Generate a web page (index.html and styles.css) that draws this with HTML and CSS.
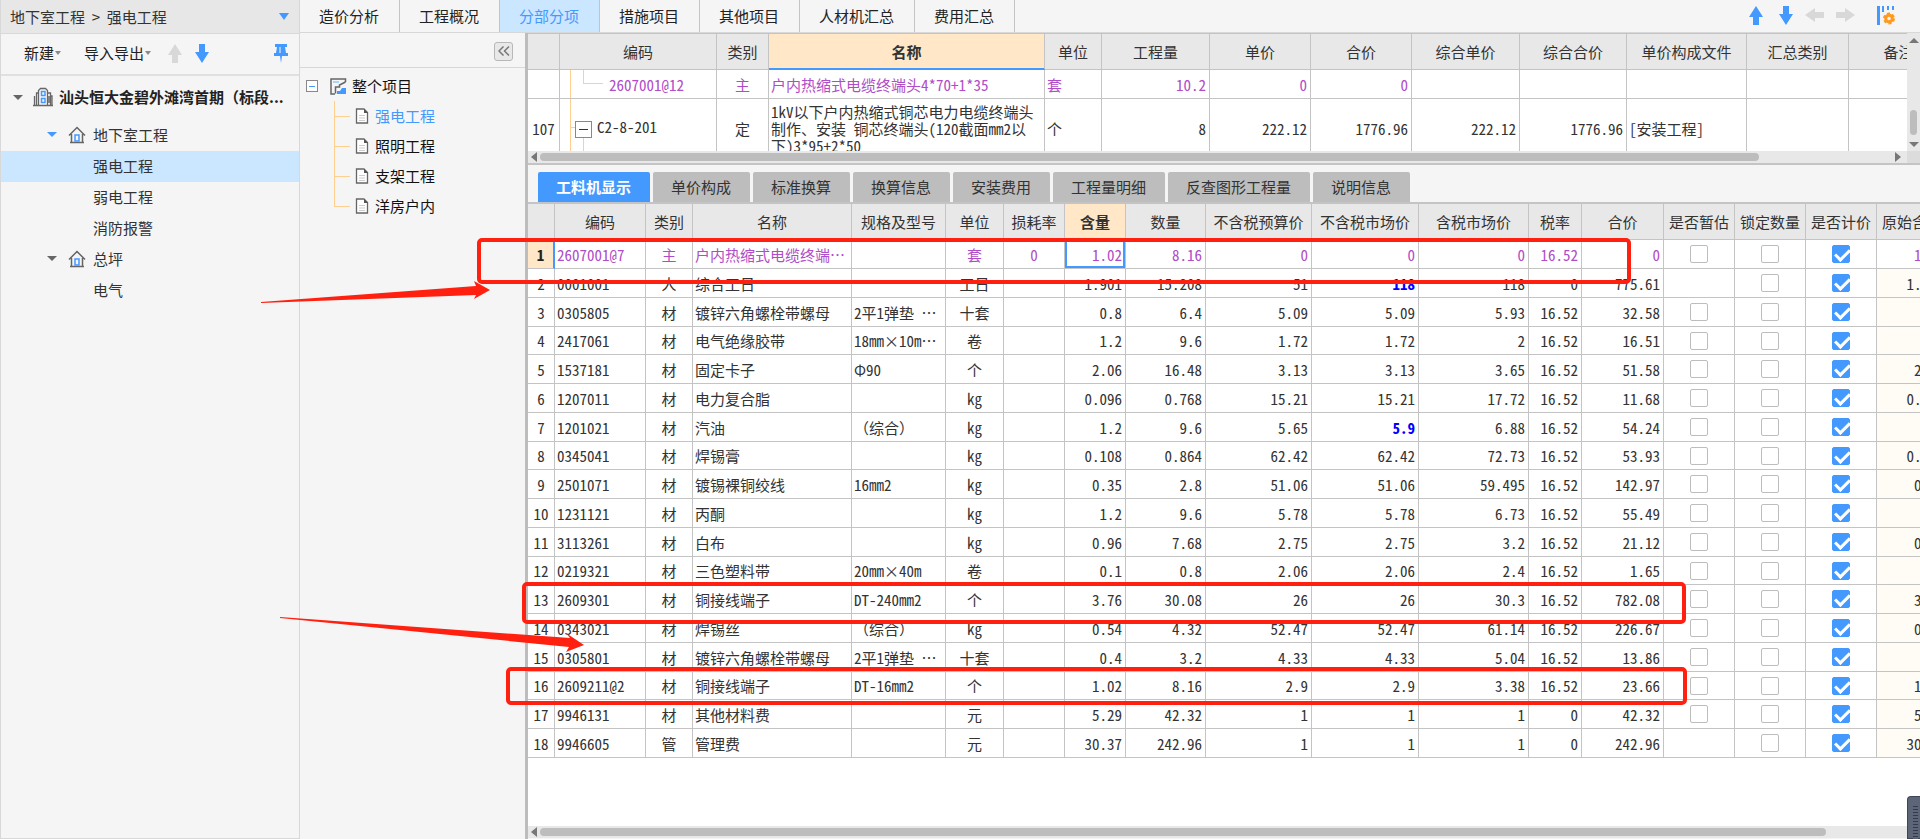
FILE: index.html
```html
<!DOCTYPE html>
<html lang="zh-CN">
<head>
<meta charset="utf-8">
<title>强电工程 - 分部分项</title>
<link rel="stylesheet" href="styles.css">
</head>
<body>
<svg class="defs" aria-hidden="true">
  <symbol id="arrow" viewBox="0 0 14 19"><path d="M7 0 14 11H10V19H4V11H0Z"/></symbol>
  <symbol id="house" viewBox="0 0 18 18"><path d="M1 9.500 9 1.500l8 8M3.500 8v8.500M14.500 8v8.500M2 16.500h14" fill="none" stroke="#666" stroke-width="1.500"/><rect x="7" y="9" width="4" height="6" fill="none" stroke="#49f" stroke-width="1.500"/></symbol>
  <symbol id="page" viewBox="0 0 14 16"><path d="M1.500 1H9l3.500 3.500V15h-11Z" fill="#fff" stroke="#666" stroke-width="1.300"/><path d="M9 1v4h4Z" fill="#555"/><path d="M4 7.500h6M4 10h6M4 12.500h6" stroke="#ccc"/></symbol>
</svg>
<div class="app">
  <aside class="sidebar">
    <div class="crumb"><span>地下室工程&nbsp; &gt;&nbsp; 强电工程</span><i class="tri blue wide"></i></div>
    <div class="side-tools">
      <button class="menu">新建<i class="tri small"></i></button>
      <button class="menu">导入导出<i class="tri small"></i></button>
      <button class="ico off" aria-label="上移"><svg width="14" height="19"><use href="#arrow"/></svg></button>
      <button class="ico down" aria-label="下移"><svg width="14" height="19"><use href="#arrow"/></svg></button>
      <button class="ico pin" aria-label="固定"><svg width="14" height="19" viewBox="0 0 14 19"><path d="M1 0h12v3h-2l1 6h2v3H8l-1 7-1-7H0V9h2l1-6H1Z"/><path d="M6 3v6" stroke="#fff"/></svg></button>
    </div>
    <ul class="tree">
      <li class="root"><i class="tri"></i><svg width="20" height="20" viewBox="0 0 20 20" fill="none" stroke="#666" stroke-width="1.300"><path d="M5.500 18.500V3.500l2-2h5l2 2v15M5.500 6h-2v12M14.500 6h3v12M0 18.500h20M1.500 9v9M17.500 9h1.500v9M16 9v7"/><path d="M8.500 4.500h3.500v4H8.500zM8.500 11.500h3.500v4H8.500z" stroke="#49f" stroke-width="1.500"/></svg><b>汕头恒大金碧外滩湾首期（标段...</b></li>
      <li class="l1"><i class="tri blue"></i><svg width="18" height="18"><use href="#house"/></svg><span>地下室工程</span></li>
      <li class="l2 on">强电工程</li>
      <li class="l2">弱电工程</li>
      <li class="l2">消防报警</li>
      <li class="l1"><i class="tri"></i><svg width="18" height="18"><use href="#house"/></svg><span>总坪</span></li>
      <li class="l2">电气</li>
    </ul>
  </aside>
  <div class="work">
    <nav class="topbar">
      <button>造价分析</button><button>工程概况</button><button class="on">分部分项</button><button>措施项目</button><button>其他项目</button><button>人材机汇总</button><button>费用汇总</button>
      <div class="top-tools">
        <svg width="14" height="19"><use href="#arrow"/></svg>
        <svg class="flip" width="14" height="19"><use href="#arrow"/></svg>
        <svg class="off" width="19" height="14" viewBox="0 0 19 14"><path d="M0 7 10 0v4h9v6h-9v4Z"/></svg>
        <svg class="off" width="19" height="14" viewBox="0 0 19 14"><path d="M19 7 9 0v4H0v6h9v4Z"/></svg>
        <svg class="cfg" width="18" height="19" viewBox="0 0 18 19"><path d="M0 0h3v19H0zM5 0h2v6H5zM10 0h2v4h-2zM15 0h2v4h-2z"/><circle cx="12" cy="12.500" r="3.300" fill="none" stroke="#ff9a1f" stroke-width="3"/><circle cx="12" cy="12.500" r="5" fill="none" stroke="#ff9a1f" stroke-width="2" stroke-dasharray="3 2.240"/></svg>
      </div>
    </nav>
    <div class="panes">
      <section class="project">
        <div class="project-head"><button class="fold" aria-label="收起"><svg width="12" height="10" viewBox="0 0 12 10" fill="none" stroke="#777" stroke-width="1.500"><path d="M5.500 0.500 1 5l4.500 4.500M11 0.500 6.500 5 11 9.500"/></svg></button></div>
        <div class="whole"><i class="minus"></i><svg width="17" height="17" viewBox="0 0 17 17"><path d="M15.500 4V1H1v15h4" fill="none" stroke="#666" stroke-width="1.500"/><path d="M3 4h6" stroke="#8cf" stroke-width="1.500"/><path d="M5.500 15.500V9h4V7l6-3" fill="none" stroke="#666" stroke-width="1.500"/><path d="M7 16v-3h3l2-3h4v6Z" fill="#49f"/></svg><span>整个项目</span></div>
        <ul class="branch">
          <li class="on"><svg width="14" height="16"><use href="#page"/></svg>强电工程</li>
          <li><svg width="14" height="16"><use href="#page"/></svg>照明工程</li>
          <li><svg width="14" height="16"><use href="#page"/></svg>支架工程</li>
          <li><svg width="14" height="16"><use href="#page"/></svg>洋房户内</li>
        </ul>
      </section>
      <main class="main">
        <div class="upper">
          <div class="upper-view">
            <table class="grid items">
              <colgroup><col class="w32"><col class="w157"><col class="w52"><col class="w276"><col class="w57"><col class="w108"><col class="w101"><col class="w101"><col class="w108"><col class="w107"><col class="w120"><col class="w102"><col class="w100"></colgroup>
              <thead><tr><th></th><th>编码</th><th>类别</th><th class="sel">名称</th><th>单位</th><th>工程量</th><th>单价</th><th>合价</th><th>综合单价</th><th>综合合价</th><th>单价构成文件</th><th>汇总类别</th><th>备注</th></tr></thead>
              <tbody>
                <tr class="main-mat"><td></td><td class="code leaf">2607001@12</td><td class="c">主</td><td>户内热缩式电缆终端头4*70+1*35</td><td>套</td><td class="r">10.2</td><td class="r">0</td><td class="r">0</td><td></td><td></td><td></td><td></td><td></td></tr>
                <tr class="tall"><td class="c">107</td><td class="code node"><i class="minus dark"></i>C2-8-201</td><td class="c">定</td><td>1kV以下户内热缩式铜芯电力电缆终端头<br>制作、安装 铜芯终端头(120截面mm2以<br>下)3*95+2*50</td><td>个</td><td class="r">8</td><td class="r">222.12</td><td class="r">1776.96</td><td class="r">222.12</td><td class="r">1776.96</td><td>[安装工程]</td><td></td><td></td></tr>
              </tbody>
            </table>
          </div>
          <div class="vbar"><i class="up"></i><i class="vthumb"></i><i class="dn"></i></div>
          <div class="hbar"><i class="lt"></i><i class="thumb upper-thumb"></i><i class="rt"></i></div>
          <div class="corner"></div>
        </div>
        <nav class="subtabs">
          <button class="on">工料机显示</button><button>单价构成</button><button>标准换算</button><button>换算信息</button><button>安装费用</button><button>工程量明细</button><button>反查图形工程量</button><button>说明信息</button>
        </nav>
        <div class="lower">
          <table class="grid parts">
            <colgroup><col class="w27"><col class="w91"><col class="w47"><col class="w159"><col class="w94"><col class="w58"><col class="w61"><col class="w61"><col class="w80"><col class="w106"><col class="w107"><col class="w110"><col class="w53"><col class="w82"><col class="w71"><col class="w71"><col class="w71"><col class="w71"></colgroup>
            <thead><tr><th></th><th>编码</th><th>类别</th><th>名称</th><th>规格及型号</th><th>单位</th><th>损耗率</th><th class="sel">含量</th><th>数量</th><th>不含税预算价</th><th>不含税市场价</th><th>含税市场价</th><th>税率</th><th>合价</th><th>是否暂估</th><th>锁定数量</th><th>是否计价</th><th>原始含量</th></tr></thead>
            <tbody id="parts"></tbody>
          </table>
        </div>
        <div class="hbar last"><i class="lt"></i><i class="thumb lower-thumb"></i></div>
      </main>
    </div>
  </div>
</div>
<div class="mark mark-a"></div>
<div class="mark mark-b"></div>
<div class="mark mark-c"></div>
<svg class="pointers" width="600" height="700" aria-hidden="true"><path d="M261 302 476 286l-2-5 16 9-16 9 2-4L261 303ZM280 617l290 21-4-5 18 12-18 7 3-5L280 618Z"/></svg>
<div class="dock"><i></i></div>
<script src="parts.js"></script>
</body>
</html>
```
FILE: styles.css
```css
* { box-sizing: border-box; }
body {
  margin: 0;
  font: 15px/20px "Noto Sans CJK SC", sans-serif;
  color: #333;
  background: #f5f5f5;
  overflow: hidden;
}
button {
  font: inherit;
  color: inherit;
  border: 0;
  padding: 0;
  background: none;
  white-space: nowrap;
}
ul { list-style: none; margin: 0; padding: 0; }
svg { flex: none; display: block; }
.defs { position: absolute; width: 0; height: 0; }
.app { display: flex; height: 100vh; }

.tri {
  flex: none;
  width: 0;
  border: 5px solid transparent;
  border-top-color: #666;
  border-bottom: 0;
}
.tri.blue { border-top-color: #4499ff; }
.tri.wide { border-top-width: 7px; }
.tri.small { border-width: 4px 3px 0; border-top-color: #888; }

/* Left navigation */
.sidebar {
  flex: none;
  width: 300px;
  border: 1px solid #d8d8d8;
  border-top: 0;
  display: flex;
  flex-direction: column;
}
.crumb {
  display: flex;
  align-items: center;
  justify-content: space-between;
  height: 34px;
  padding: 0 10px 0 9px;
  background: #e7e7e7;
  border-bottom: 1px solid #d8d8d8;
}
.side-tools {
  display: flex;
  align-items: center;
  height: 42px;
  padding: 0 11px 2px 23px;
  border-bottom: 2px solid #e0e0e0;
  color: #222;
}
.menu { display: flex; align-items: center; gap: 1px; margin-right: 23px; }
.menu + .menu { margin-right: 17px; }
.ico { fill: #4499ff; margin-right: 13px; }
.ico.off, .off { fill: #d8d8d8; }
.down svg, .flip { transform: rotate(180deg); }
.ico.pin { margin: 0 0 0 auto; }
.tree li { display: flex; align-items: center; height: 31px; padding-bottom: 2px; }
.tree .root { height: 44px; padding-left: 12px; color: #222; }
.root svg { margin: 0 6px 0 10px; }
.root b { white-space: nowrap; }
.tree .l1 { padding-left: 46px; }
.l1 svg { margin: 0 7px 0 11px; }
.tree .l2 { padding-left: 92px; }
.tree .on { background: #cbe6ff; }

/* Module tabs */
.work { flex: 1; min-width: 0; display: flex; flex-direction: column; }
.topbar {
  display: flex;
  flex: none;
  height: 33px;
  border-bottom: 1px solid #d8d8d8;
}
.topbar button {
  padding: 0 20px 0 19px;
  border-right: 1px solid #c4c4c4;
  color: #222;
}
.topbar .on { background: #cbe6ff; color: #4499ff; }
.top-tools {
  display: flex;
  align-items: center;
  gap: 12px;
  margin-left: auto;
  padding: 0 25px 2px 0;
  fill: #4499ff;
}
.top-tools .flip { margin-left: 4px; }
.top-tools .cfg { margin-left: 10px; }
.panes { flex: 1; min-height: 0; display: flex; }

/* Project outline */
.project { flex: none; width: 225px; color: #111; }
.project-head {
  display: flex;
  align-items: center;
  justify-content: flex-end;
  height: 35px;
  padding: 2px 12px 0 0;
  border-bottom: 1px solid #d8d8d8;
}
.fold {
  width: 19px;
  height: 19px;
  display: grid;
  place-items: center;
  border: 1px solid #b8b8b8;
  border-radius: 3px;
  background: #e8e8e8;
}
.whole { display: flex; align-items: center; height: 33px; padding: 3px 0 0 6px; }
.whole svg { margin: 0 5px 0 12px; }
.minus {
  flex: none;
  width: 12px;
  height: 12px;
  border: 1px solid #888;
  background: linear-gradient(#4499ff, #4499ff) center / 6px 1px no-repeat #fff;
}
.branch li { display: flex; align-items: center; height: 30px; padding-left: 34px; }
.branch li::before {
  content: "";
  width: 16px;
  height: 30px;
  margin-right: 5px;
  background:
    linear-gradient(#ffcf8f, #ffcf8f) 0 0 / 1px 100% no-repeat,
    linear-gradient(#ffcf8f, #ffcf8f) 0 15px / 100% 1px no-repeat;
}
.branch li:last-child::before { background-size: 1px 15px, 100% 1px; }
.branch svg { margin-right: 6px; }
.branch .on { color: #4499ff; }

/* Data grids */
.main {
  flex: 1;
  min-width: 0;
  display: flex;
  flex-direction: column;
  border-left: 3px solid #bdbdbd;
}
.upper {
  flex: none;
  display: grid;
  grid-template: 118px 12px / 1fr 13px;
  border-bottom: 2px solid #c4c4c4;
}
.upper-view { overflow: hidden; background: #fff; }
.grid {
  table-layout: fixed;
  border-collapse: separate;
  border-spacing: 0;
  font: 15px/17px "Noto Sans Mono CJK SC", "Noto Sans CJK SC", monospace;
  background: #fff;
  color: #333;
}
.items { width: 1421px; border-top: 1px solid #c4c4c4; }
.parts { width: 1420px; }
.grid th, .grid td {
  border: solid #c4c4c4;
  border-width: 0 1px 1px 0;
  padding: 0 3px 0 2px;
  white-space: nowrap;
  overflow: hidden;
}
.grid th { height: 36px; background: #e8e8e8; font-weight: 400; padding: 0; }
.grid th.sel { background: #ffe7c8; font-weight: 700; }
.items th.sel { border-bottom: 2px solid #4499ff; }
.grid td { height: 29px; text-align: left; }
.grid .c { text-align: center; padding: 0; }
.grid .r { text-align: right; }
.grid .main-mat { color: #b04cc8; }
.grid .tall td { height: 59px; }
.grid .code { padding-left: 49px; }
.grid .leaf {
  background:
    linear-gradient(#ffcf8f, #ffcf8f) 10px 0 / 1px 100% no-repeat,
    linear-gradient(#ffcf8f, #ffcf8f) 23px 0 / 1px 14px no-repeat,
    linear-gradient(#ffcf8f, #ffcf8f) 23px 13px / 20px 1px no-repeat;
}
.grid .node {
  padding-left: 15px;
  background:
    linear-gradient(#ffcf8f, #ffcf8f) 10px 0 / 1px 100% no-repeat,
    linear-gradient(#ffcf8f, #ffcf8f) 10px 28px / 6px 1px no-repeat,
    linear-gradient(#ffcf8f, #ffcf8f) 23px 36px / 1px 24px no-repeat;
}
.minus.dark {
  display: inline-block;
  vertical-align: middle;
  width: 17px;
  height: 17px;
  margin-right: 5px;
  background: linear-gradient(#333, #333) center / 9px 1px no-repeat #fff;
}
.w27 { width: 27px; } .w32 { width: 32px; } .w47 { width: 47px; }
.w52 { width: 52px; } .w53 { width: 53px; } .w57 { width: 57px; }
.w58 { width: 58px; } .w61 { width: 61px; } .w71 { width: 71px; }
.w80 { width: 80px; } .w82 { width: 82px; } .w91 { width: 91px; }
.w94 { width: 94px; } .w100 { width: 100px; } .w101 { width: 101px; }
.w102 { width: 102px; } .w106 { width: 106px; } .w107 { width: 107px; }
.w108 { width: 108px; } .w110 { width: 110px; } .w120 { width: 120px; }
.w157 { width: 157px; } .w159 { width: 159px; } .w276 { width: 276px; }

.parts tr:nth-child(4n) td { height: 28px; }
.parts .orig { background: #fffbf5; }
.parts .main-mat .orig { background: #fff; }
.parts .main-mat .num {
  background: #ffe7c8;
  color: #222;
  font-weight: 700;
  border-right: 2px solid #4499ff;
}
.parts .focus { box-shadow: inset 0 0 0 2px #4499ff; }
.parts .changed { color: #00f; font-weight: 700; }
.parts input {
  appearance: none;
  display: block;
  width: 18px;
  height: 18px;
  margin: 0 auto;
  border: 1px solid #bdbdbd;
  border-radius: 2px;
  background: #fff;
}
.parts input:checked { border-color: #4499ff; background: #4499ff; }
.parts input:checked::before {
  content: "";
  display: block;
  width: 12px;
  height: 6px;
  margin: 3px 2px;
  border: solid #fff;
  border-width: 0 0 3px 3px;
  transform: rotate(-45deg);
}

/* Scroll bars */
.vbar, .hbar { display: flex; align-items: center; background: #e8e8e8; }
.vbar { flex-direction: column; padding: 5px 0 4px; }
.hbar { flex: none; height: 12px; padding: 0 6px 0 3px; }
.hbar.last { height: 13px; border-bottom: 1px solid #f5f5f5; }
.vthumb { width: 7px; height: 25px; margin: auto 0 7px; border-radius: 4px; background: #bdbdbd; }
.thumb { height: 8px; margin-left: 3px; border-radius: 4px; background: #bdbdbd; }
.upper-thumb { width: 89%; }
.lower-thumb { width: 93%; }
.up, .dn, .lt, .rt { flex: none; width: 0; border: 5px solid transparent; }
.up { border-top: 0; border-bottom-color: #777; }
.dn { border-bottom: 0; border-top-color: #777; }
.lt { border-left: 0; border-right: 6px solid #777; }
.rt { border-right: 0; border-left: 6px solid #777; margin-left: auto; }
.corner { background: #dcdcdc; }

/* Detail tabs */
.subtabs {
  flex: none;
  display: flex;
  gap: 3px;
  height: 39px;
  padding: 7px 10px 0;
  border-bottom: 2px solid #c4c4c4;
}
.subtabs button {
  padding: 0 19px 0 18px;
  border-radius: 2px 2px 0 0;
  background: #bdbdbd;
}
.subtabs .on { background: #4499ff; color: #fff; font-weight: 700; }
.lower { flex: 1; min-height: 0; overflow: hidden; background: #fff; }

/* Review marks over the window */
.mark { position: absolute; border: 4px solid #ff2010; border-radius: 5px; }
.mark-a { left: 477px; top: 238px; width: 1154px; height: 46px; }
.mark-b { left: 522px; top: 582px; width: 1164px; height: 42px; }
.mark-c { left: 506px; top: 667px; width: 1181px; height: 38px; }
.pointers { position: absolute; left: 0; top: 0; fill: #ff2010; }
.dock {
  position: absolute;
  right: 0;
  bottom: 0;
  width: 13px;
  height: 43px;
  padding: 9px 2px 0 5px;
  border: 1px solid #3e4556;
  border-right: 0;
  border-radius: 4px 0 0;
  background: #5d6578;
}
.dock i { display: block; height: 33px; background: repeating-linear-gradient(#333a4a 0 1px, #5d6578 1px 3px); }
```
FILE: parts.js
```javascript
// code, kind, name, spec, unit, loss, content, quantity, budget, market, taxed, rate, total
const parts = `2607001@7|主|户内热缩式电缆终端…||套|0|1.02|8.16|0|0|0|16.52|0
0001001|人|综合工日||工日||1.901|15.208|51|118|118|0|775.61
0305805|材|镀锌六角螺栓带螺母|2平1弹垫 …|十套||0.8|6.4|5.09|5.09|5.93|16.52|32.58
2417061|材|电气绝缘胶带|18mm×10m…|卷||1.2|9.6|1.72|1.72|2|16.52|16.51
1537181|材|固定卡子|Φ90|个||2.06|16.48|3.13|3.13|3.65|16.52|51.58
1207011|材|电力复合脂||kg||0.096|0.768|15.21|15.21|17.72|16.52|11.68
1201021|材|汽油|（综合）|kg||1.2|9.6|5.65|5.9|6.88|16.52|54.24
0345041|材|焊锡膏||kg||0.108|0.864|62.42|62.42|72.73|16.52|53.93
2501071|材|镀锡裸铜绞线|16mm2|kg||0.35|2.8|51.06|51.06|59.495|16.52|142.97
1231121|材|丙酮||kg||1.2|9.6|5.78|5.78|6.73|16.52|55.49
3113261|材|白布||kg||0.96|7.68|2.75|2.75|3.2|16.52|21.12
0219321|材|三色塑料带|20mm×40m|卷||0.1|0.8|2.06|2.06|2.4|16.52|1.65
2609301|材|铜接线端子|DT-240mm2|个||3.76|30.08|26|26|30.3|16.52|782.08
0343021|材|焊锡丝|（综合）|kg||0.54|4.32|52.47|52.47|61.14|16.52|226.67
0305801|材|镀锌六角螺栓带螺母|2平1弹垫 …|十套||0.4|3.2|4.33|4.33|5.04|16.52|13.86
2609211@2|材|铜接线端子|DT-16mm2|个||1.02|8.16|2.9|2.9|3.38|16.52|23.66
9946131|材|其他材料费||元||5.29|42.32|1|1|1|0|42.32
9946605|管|管理费||元||30.37|242.96|1|1|1|0|242.96`.split("\n").map(line => line.split("|"));

const centered = [1, 4, 5];
const tick = (label, on) => `<input type="checkbox" aria-label="${label}"${on ? " checked" : ""}>`;

document.getElementById("parts").innerHTML = parts.map((p, i) => {
  const cells = p.map((value, c) => {
    const names = [centered.includes(c) ? "c" : c > 5 ? "r" : ""];
    if (i === 0 && c === 6) names.push("focus");
    if (c === 9 && p[8] !== p[9]) names.push("changed");
    return `<td class="${names.join(" ").trim()}">${value}</td>`;
  }).join("");
  const estimate = p[1] === "人" || p[1] === "管" ? "" : tick("是否暂估", false);
  return `<tr${i === 0 ? ' class="main-mat"' : ""}><td class="c num">${i + 1}</td>${cells}` +
    `<td class="c">${estimate}</td><td class="c">${tick("锁定数量", false)}</td>` +
    `<td class="c">${tick("是否计价", true)}</td><td class="r orig">${p[6]}</td></tr>`;
}).join("");
```
